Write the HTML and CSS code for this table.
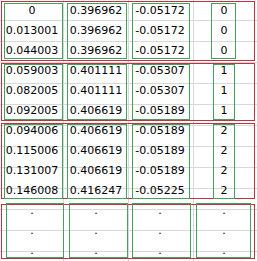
FILE: index.html
```html
<!DOCTYPE html>
<html>
<head>
<meta charset="utf-8">
<link rel="stylesheet" href="styles.css">
</head>
<body>
<div class="sheet">
  <section class="block b1">
    <div class="col c1"><div class="cell">0</div><div class="cell">0.013001</div><div class="cell">0.044003</div></div>
    <div class="col c2"><div class="cell">0.396962</div><div class="cell">0.396962</div><div class="cell">0.396962</div></div>
    <div class="col c3"><div class="cell">-0.05172</div><div class="cell">-0.05172</div><div class="cell">-0.05172</div></div>
    <div class="col c4"><div class="cell">0</div><div class="cell">0</div><div class="cell">0</div></div>
  </section>
  <section class="block b2">
    <div class="col c1"><div class="cell">0.059003</div><div class="cell">0.082005</div><div class="cell">0.092005</div></div>
    <div class="col c2"><div class="cell">0.401111</div><div class="cell">0.401111</div><div class="cell">0.406619</div></div>
    <div class="col c3"><div class="cell">-0.05307</div><div class="cell">-0.05307</div><div class="cell">-0.05189</div></div>
    <div class="col c4"><div class="cell">1</div><div class="cell">1</div><div class="cell">1</div></div>
  </section>
  <section class="block b3">
    <div class="col c1"><div class="cell">0.094006</div><div class="cell">0.115006</div><div class="cell">0.131007</div><div class="cell">0.146008</div></div>
    <div class="col c2"><div class="cell">0.406619</div><div class="cell">0.406619</div><div class="cell">0.406619</div><div class="cell">0.416247</div></div>
    <div class="col c3"><div class="cell">-0.05189</div><div class="cell">-0.05189</div><div class="cell">-0.05189</div><div class="cell">-0.05225</div></div>
    <div class="col c4"><div class="cell">2</div><div class="cell">2</div><div class="cell">2</div><div class="cell">2</div></div>
  </section>
  <section class="block b4">
    <div class="col c1"><div class="cell">.</div><div class="cell">.</div><div class="cell">.</div></div>
    <div class="col c2"><div class="cell">.</div><div class="cell">.</div><div class="cell">.</div></div>
    <div class="col c3"><div class="cell">.</div><div class="cell">.</div><div class="cell">.</div></div>
    <div class="col c4"><div class="cell">.</div><div class="cell">.</div><div class="cell">.</div></div>
  </section>
</div>
</body>
</html>
```

FILE: styles.css
```css
html, body {
  margin: 0;
  padding: 0;
  background: #ffffff;
}
.sheet {
  width: 257px;
  height: 261px;
  padding-top: 1px;
  box-sizing: border-box;
  font-family: "DejaVu Sans", Verdana, sans-serif;
  font-size: 11px;
  color: #000;
  background-image:
    repeating-linear-gradient(to bottom, transparent 0, transparent 20px, #d8d8d8 20px, #d8d8d8 21px),
    repeating-linear-gradient(to right, transparent 0, transparent 64px, #d8d8d8 64px, #d8d8d8 65px);
  background-position: 0 0, -1px 0;
  overflow: hidden;
}
.block {
  position: relative;
  display: grid;
  grid-template-columns: 64px 64px 64px 64px;
}
.block::before {
  content: "";
  position: absolute;
  left: 1px;
  right: 2px;
  top: 0;
  bottom: 0;
  border: 1px solid #c5303f;
  pointer-events: none;
}
.b2::before { top: 2px; bottom: 0; }
.b3::before { top: 2px; bottom: 2px; }
.b4::before { top: 3px; bottom: 2px; }
.col {
  position: relative;
}
.col::after {
  content: "";
  position: absolute;
  top: 2px;
  bottom: 2px;
  border: 1px solid #45a060;
}
.c1::after { left: 4px; right: 1px; }
.c2::after { left: 3px; right: 1px; }
.c3::after { left: 4px; right: 2px; }
.c4::after { left: 19px; right: 20px; }
.b2 .col::after { top: 3px; bottom: 1px; }
.b2 .c4::after { left: 21px; right: 21px; }
.b3 .col::after { top: 3px; bottom: 2px; }
.b3 .c4::after { left: 21px; right: 21px; }
.b4 .col::after { top: 2px; bottom: 3px; }
.b4 .c1::after { left: 6px; right: 0px; }
.b4 .c2::after { left: 5px; right: 0px; }
.b4 .c3::after { left: 4px; right: 1px; }
.b4 .c4::after { left: 4px; right: 5px; }
.cell {
  height: 20px;
  line-height: 20px;
  text-align: center;
  white-space: nowrap;
}
```
